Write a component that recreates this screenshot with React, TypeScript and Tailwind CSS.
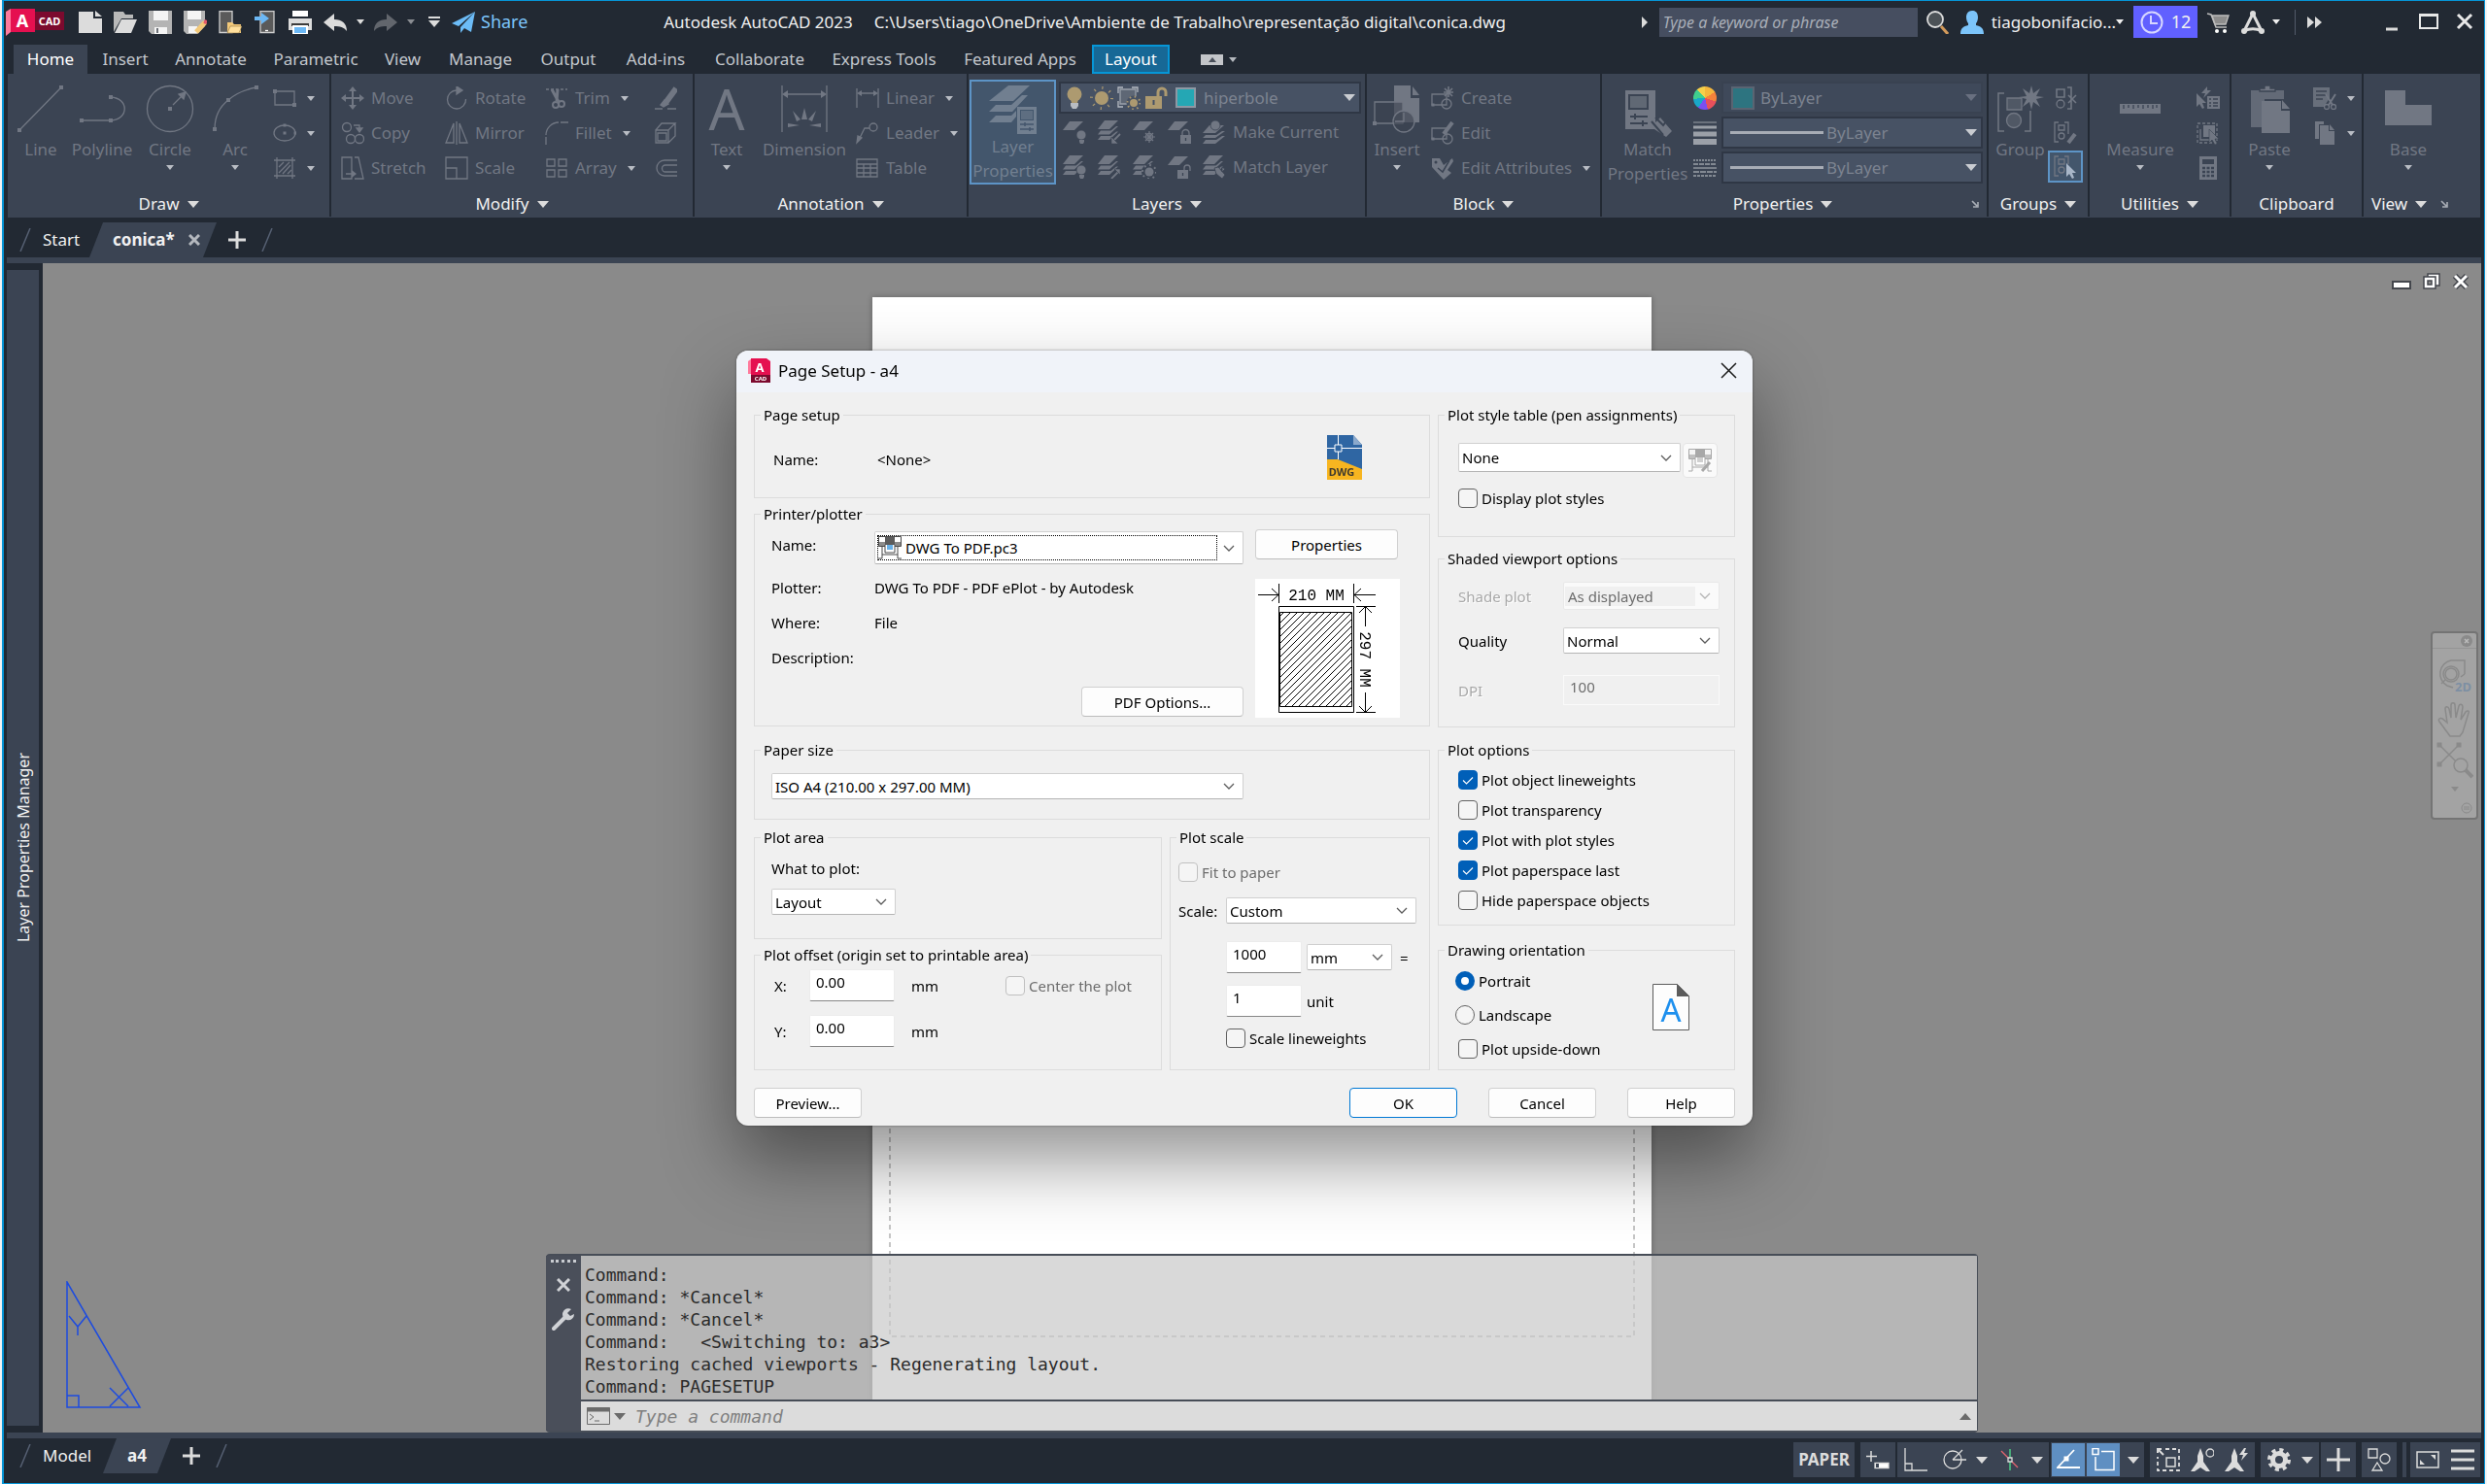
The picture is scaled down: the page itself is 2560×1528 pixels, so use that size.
import { ReactNode } from "react";
import clsx from "clsx";

type ChildrenProps = { children?: ReactNode; className?: string };

/* ---------- drawing helpers ---------- */

const Icon = ({
  size = 24,
  children,
  className,
}: ChildrenProps & { size?: number }) => (
  <svg
    width={size}
    height={size}
    viewBox={`0 0 ${size} ${size}`}
    fill="none"
    stroke="currentColor"
    strokeWidth="1.3"
    className={clsx("shrink-0", className)}
    aria-hidden="true"
  >
    {children}
  </svg>
);

const Dot = ({ x, y, s = 4 }: { x: number; y: number; s?: number }) => (
  <rect
    x={x - s / 2}
    y={y - s / 2}
    width={s}
    height={s}
    fill="currentColor"
    stroke="none"
  />
);

const Arrow = ({ className }: { className?: string }) => (
  <svg
    width="8"
    height="5"
    viewBox="0 0 8 5"
    className={clsx("shrink-0 fill-current", className)}
    aria-hidden="true"
  >
    <path d="M0 0h8L4 5z" />
  </svg>
);

const BigArrow = ({ className }: { className?: string }) => (
  <svg
    width="12"
    height="7"
    viewBox="0 0 12 7"
    className={clsx("shrink-0 fill-current", className)}
    aria-hidden="true"
  >
    <path d="M0 0h12L6 7z" />
  </svg>
);

const Sheet = () => (
  <path d="M7 1h14L12 10H0z" fill="currentColor" stroke="none" />
);

const Stack = () => (
  <path
    d="M7 0h14L12 9H0zM19 6h2L12 14.500H0l3-4h10.500zM19 11.500h2L12 20H0l3-4h10.500z"
    fill="currentColor"
    stroke="none"
  />
);

/* ---------- ribbon icons ---------- */

const lineIcon = (
  <Icon size={50}>
    <path d="M3 47L46 3" />
    <Dot x={3} y={47} />
    <Dot x={46} y={3} />
  </Icon>
);
const polylineIcon = (
  <Icon size={50}>
    <path d="M4 37h30c19-1 19-23 0-24" />
    <Dot x={4} y={37} />
    <Dot x={34} y={37} />
    <Dot x={34} y={13} />
  </Icon>
);
const circleIcon = (
  <Icon size={50}>
    <circle cx="25" cy="25" r="23.5" />
    <path d="M28 21l11-11" />
    <path d="M41 8l-2 7-5-5z" fill="currentColor" />
    <Dot x={25} y={25} />
  </Icon>
);
const arcIcon = (
  <Icon size={50}>
    <path d="M4 46c0-12 5-23 14-30C26 9 36 5 47 3" />
    <Dot x={4} y={46} />
    <Dot x={18} y={16} />
    <Dot x={47} y={3} />
  </Icon>
);
const rectIcon = (
  <Icon>
    <path d="M2 5h20v14H2z" />
    <Dot x={2} y={5} />
    <Dot x={22} y={19} />
  </Icon>
);
const ellipseIcon = (
  <Icon>
    <ellipse cx="12" cy="12" rx="11" ry="8" />
    <Dot x={12} y={12} s={3} />
    <Dot x={12} y={4} s={3} />
    <Dot x={23} y={12} s={3} />
  </Icon>
);
const hatchIcon = (
  <Icon>
    <path d="M1 4h22M1 20h22M4 1v22M20 1v22" />
    <path d="M6 11l5-5M6 17L17 6M10 18l8-9M15 18l4-4" />
  </Icon>
);
const moveIcon = (
  <Icon>
    <path d="M12 3v18M3 12h18" strokeWidth="2" />
    <path
      d="M12 0l4 5H8zM12 24l4-5H8zM0 12l5-4v8zM24 12l-5-4v8z"
      fill="currentColor"
      stroke="none"
    />
  </Icon>
);
const copyIcon = (
  <Icon>
    <circle cx="6" cy="6" r="4.5" />
    <circle cx="10" cy="18" r="4.5" />
    <circle cx="19" cy="18" r="4.5" />
    <path d="M13 4h6v4" />
    <path d="M16 7h6l-3 4z" fill="currentColor" />
  </Icon>
);
const stretchIcon = (
  <Icon>
    <path d="M1 1h10v22H1zM14 1l4 0 5 22h-9M5 18h10" />
    <path d="M11 14l5 4-5 4z" fill="currentColor" stroke="none" />
  </Icon>
);
const rotateIcon = (
  <Icon>
    <path d="M12 4a9.500 9.500 0 1 0 9.500 9" />
    <path d="M12 0l6 4-6 4z" fill="currentColor" />
  </Icon>
);
const mirrorIcon = (
  <Icon>
    <path d="M9 2v20H1zM15 2v20h8zM12 0v24" />
  </Icon>
);
const scaleIcon = (
  <Icon>
    <path d="M1 1h22v22H1zM1 12h11v11" />
  </Icon>
);
const trimIcon = (
  <Icon>
    <path d="M1 3h22" strokeDasharray="3 2" />
    <path d="M7 3l7 13M13 3l-1 12" strokeWidth="3" />
    <circle cx="11" cy="19" r="3" strokeWidth="2" />
    <circle cx="17" cy="18" r="3" strokeWidth="2" />
  </Icon>
);
const filletIcon = (
  <Icon>
    <path d="M1 14C1 7 7 1 14 1M1 16v8M16 1h8" />
  </Icon>
);
const arrayIcon = (
  <Icon>
    <path d="M2 3h8v7H2zM14 3h8v7h-8zM2 14h8v7H2zM14 14h8v7h-8z" />
  </Icon>
);
const eraseIcon = (
  <Icon>
    <path d="M23 2L12 17" strokeWidth="6" />
    <path d="M7 19l4-5 4 4-5 3z" fill="currentColor" />
    <path d="M1 23h8M14 23h9" />
  </Icon>
);
const explodeIcon = (
  <Icon>
    <path d="M2 9h13v13H2zM4 12h9v8H4zM2 9l6-7h14l-7 7M22 2v13l-7 7M9 2h12" />
  </Icon>
);
const offsetIcon = (
  <Icon>
    <path d="M24 4H11a8 8 0 0 0 0 16h13M24 9H12a3.500 3.500 0 0 0 0 7h12" />
  </Icon>
);
const textIcon = (
  <span className="font-['Noto_Sans',sans-serif] text-[58px] leading-[50px]">A</span>
);
const dimensionIcon = (
  <Icon size={50}>
    <path d="M2 1v48M48 1v48M4 10h42" />
    <path
      d="M2 10l6-4v8zM48 10l-6-4v8zM25 24l3 12h-6zM13 27l8 9-4 2zM37 27l-8 9 4 2zM8 40l12 2-12 2zM42 40l-12 2 12 2z"
      fill="currentColor"
      stroke="none"
    />
  </Icon>
);
const linearIcon = (
  <Icon>
    <path d="M1 2v20M23 2v20M3 7h18" />
    <path d="M1 7l5-3v6zM23 7l-5-3v6z" fill="currentColor" stroke="none" />
  </Icon>
);
const leaderIcon = (
  <Icon>
    <circle cx="18" cy="6" r="4" />
    <path d="M14 7H9L3 19" />
    <path d="M1 22l1-7 4 2z" fill="currentColor" />
  </Icon>
);
const tableIcon = (
  <Icon>
    <path d="M1 3h21v18H1zM1 8h21M1 12h21M1 17h21M8 8v13M15 8v13" />
  </Icon>
);
const layerPropsIcon = (
  <svg width="50" height="50" viewBox="0 0 50 50" fill="currentColor" aria-hidden="true">
    <path d="M20 0h22L25 16H0zM7 20L0 27h24l16-17h-6L23 20zM7 31l-7 7h23l5-6v-6l-5 5z" />
    <path fillRule="evenodd" d="M29 22h20v28H29zM32 25v11h14V25z" />
    <path d="M33 26h12v9H33z" opacity=".6" />
    <path d="M32 40h14M32 45h14M37 38v4M42 43v4" stroke="#43566c" strokeWidth="1.500" />
  </svg>
);
const insertIcon = (
  <Icon size={50}>
    <path d="M22 1h17v13h9v25H22z" fill="currentColor" stroke="none" />
    <path d="M41 2v9h7z" fill="currentColor" stroke="none" />
    <path d="M2 18h29v22H2z" fill="#3c4250" fillOpacity=".6" />
    <circle cx="32" cy="38" r="11" fill="#3c4250" fillOpacity=".6" />
    <path d="M32 29v9h-9" />
    <Dot x={2} y={40} />
  </Icon>
);
const createIcon = (
  <Icon>
    <path d="M1 8h15v11H1z" />
    <circle cx="16" cy="18" r="5" />
    <path d="M18 0v11M13 6h10M14 2l8 8M22 2l-8 8" strokeWidth="1.600" />
    <Dot x={2} y={19} s={3} />
  </Icon>
);
const editIcon = (
  <Icon>
    <path d="M1 7h15v11H1z" />
    <circle cx="17" cy="18" r="5" />
    <path d="M22 1L13 13" strokeWidth="4" />
    <Dot x={2} y={18} s={3} />
  </Icon>
);
const attributesIcon = (
  <Icon>
    <path d="M1 2h8l4 7 9-7 1 3-6 9 4 3-8 7L1 11z" fill="currentColor" stroke="none" />
    <path d="M7 12l5 4 7-12" stroke="#3b4453" strokeWidth="1.500" />
    <circle cx="5" cy="6" r="1.500" fill="#3b4453" stroke="none" />
  </Icon>
);
const matchPropsIcon = (
  <Icon size={50}>
    <path fillRule="evenodd" d="M2 2h31v33l5-5 12 14-6 6-12-8H2zM5 6v16h21V6z" fill="currentColor" stroke="none" />
    <path d="M7 29h18M7 36h18M12 26v6M20 33v6M29 34l12 14M33 30l8 8 7-9" stroke="#3b4453" strokeWidth="2" />
    <path d="M7 8h17v12H7z" fill="currentColor" stroke="none" opacity=".7" />
  </Icon>
);
const weightIcon = (
  <Icon>
    <path d="M0 1h24" strokeWidth="1" />
    <path d="M0 6h24" strokeWidth="3" />
    <path d="M0 13h24" strokeWidth="5" />
    <path d="M0 21h24" strokeWidth="6" />
  </Icon>
);
const linetypeIcon = (
  <Icon>
    <path d="M0 4h24" strokeDasharray="2 1" />
    <path d="M0 8h24" strokeDasharray="5 1" />
    <path d="M0 12h24" />
    <path d="M0 16h24" strokeDasharray="6 1" />
    <path d="M0 20h24" strokeDasharray="3 1" />
  </Icon>
);
const groupIcon = (
  <Icon size={50}>
    <path d="M8 9H2v39h6M29 48h6V27" strokeWidth="1.500" />
    <path d="M11 14h15v12H11z" fill="currentColor" fillOpacity=".4" />
    <circle cx="18" cy="37" r="7.500" fill="currentColor" fillOpacity=".4" />
    <path
      d="M36 1l2 8 7-5-4 8 8 1-8 2 4 8-7-5-2 8-2-8-7 5 4-8-8-2 8-1-4-8 7 5z"
      fill="currentColor"
      stroke="none"
    />
  </Icon>
);
const ungroupIcon = (
  <Icon>
    <path d="M3 3h8v8H3zM14 1h4v22h-4M15 9l8 8M23 9l-8 8" strokeWidth="1.600" />
    <circle cx="7" cy="18" r="4" />
  </Icon>
);
const groupEditIcon = (
  <Icon>
    <path d="M5 1H1v20h4M11 1h4v12M5 4h6v5H5z" />
    <circle cx="8" cy="15" r="3" />
    <path d="M22 13l-7 9" strokeWidth="4" />
  </Icon>
);
const cursorPath = "M13 8v14l3-3 3 5 2-1-2-5h4z";
const groupSelectIcon = (
  <Icon>
    <path d="M5 1H1v20h4M11 1h4v8M5 4h6v5H5z" />
    <circle cx="8" cy="15" r="3" />
    <path d={cursorPath} fill="#a8b6c8" stroke="none" />
  </Icon>
);
const measureIcon = (
  <Icon size={50}>
    <path d="M4 20h42v10H4z" fill="currentColor" stroke="none" />
    <path d="M8 21v4M13 21v3M18 21v4M23 21v3M28 21v4M33 21v3M38 21v4M42 21v3" stroke="#3b4453" />
  </Icon>
);
const quickSelectIcon = (
  <Icon>
    <path d="M11 0L5 7h4L7 12l8-8h-4zM0 7v14l3-3 3 5 2-1-2-5h4z" fill="currentColor" stroke="none" />
    <path d="M11 10h13v13H11z" fill="currentColor" stroke="none" />
    <path d="M13 13h2M17 13h5M13 17h2M17 17h5M13 20h2M17 20h5" stroke="#3b4453" />
  </Icon>
);
const selectAllIcon = (
  <Icon>
    <path d="M1 2h20v20H1z" strokeDasharray="3 2" />
    <path d="M7 4h12v12H7z" fill="currentColor" stroke="none" />
    <path d="M4 8v11h10" />
    <path d={cursorPath} fill="currentColor" stroke="#3b4453" strokeWidth=".6" />
  </Icon>
);
const calculatorIcon = (
  <Icon>
    <path d="M3 0h18v24H3z" fill="currentColor" stroke="none" />
    <path d="M6 3h12v5H6z" fill="#3b4453" stroke="none" />
    <path d="M6 12h12M6 16h12M6 20h12" stroke="#3b4453" strokeWidth="2.500" strokeDasharray="3 1.500" />
  </Icon>
);
const pasteIcon = (
  <Icon size={50}>
    <path d="M6 6h34v9H20v29H6z" fill="currentColor" stroke="none" opacity=".75" />
    <path d="M15 7h16V4h-5V1h-6v3h-5z" fill="currentColor" stroke="#3b4453" />
    <path d="M17 17h20v10h9v23H17z" fill="currentColor" stroke="none" />
    <path d="M38 16v9h8z" fill="currentColor" stroke="none" />
  </Icon>
);
const cutIcon = (
  <Icon>
    <path d="M0 1h17v11l-6 9H0z" fill="currentColor" stroke="none" opacity=".85" />
    <path d="M3 5h11M3 9h10M3 13h7" stroke="#3b4453" />
    <path d="M13 8l7 11M23 8l-7 11" strokeWidth="2" />
    <circle cx="14" cy="21" r="2.500" />
    <circle cx="21" cy="21" r="2.500" />
  </Icon>
);
const copyClipIcon = (
  <Icon>
    <path d="M2 0h9v3H6v15H2z" fill="currentColor" stroke="none" />
    <path d="M7 4h9v6h6v14H7z" fill="currentColor" stroke="none" />
    <path d="M17 3v6h5z" fill="currentColor" stroke="none" />
  </Icon>
);
const baseIcon = (
  <Icon size={50}>
    <path d="M1 6h21v15h27v21H1z" fill="currentColor" stroke="none" />
  </Icon>
);

const bulb = (
  <>
    <circle cx="19" cy="15" r="5" fill="currentColor" stroke="#3b4453" strokeWidth=".8" />
    <path d="M17 20h5v2l-1 2h-3l-1-2z" fill="currentColor" stroke="none" />
  </>
);
const layerTools = [
  [
    <Icon><Sheet />{bulb}</Icon>,
    <Icon><Stack /><path d="M23 14l-7 7" strokeWidth="1.800" /><path d="M14 17v7h7z" fill="currentColor" stroke="#3b4453" strokeWidth=".6" /></Icon>,
    <Icon>
      <Sheet />
      <circle cx="17" cy="17" r="3.500" />
      <path d="M17 11v12M11 17h12M13 13l8 8M21 13l-8 8" strokeWidth="1.200" />
    </Icon>,
    <Icon>
      <Sheet />
      <path d="M13 15h11v9H13z" fill="currentColor" stroke="none" />
      <path d="M15 15v-2a3.500 3.500 0 0 1 7 0v2" />
      <path d="M18.500 18v3" stroke="#3b4453" />
    </Icon>,
  ],
  [
    <Icon><Stack />{bulb}</Icon>,
    <Icon><Stack /><path d="M14 24l7-7" strokeWidth="1.800" /><path d="M17 14h6v6z" fill="currentColor" stroke="#3b4453" strokeWidth=".6" /></Icon>,
    <Icon>
      <Stack />
      <circle cx="17" cy="17" r="8" fill="#3b4453" stroke="none" />
      <circle cx="17" cy="17" r="4.500" fill="currentColor" stroke="none" />
      <circle cx="17" cy="17" r="7" strokeDasharray="1.800 3.700" strokeWidth="2" />
    </Icon>,
    <Icon>
      <Sheet />
      <path d="M10 15h11v9H10z" fill="currentColor" stroke="none" />
      <path d="M17 15v-2a3 3 0 0 1 6 0v3" />
      <path d="M15.500 18v3" stroke="#3b4453" />
    </Icon>,
  ],
];
const makeCurrentIcon = (
  <Icon>
    <path
      d="M7 5h15L13 13H0zM20 11h3L13 18H0l3-3h11zM20 16h3L13 24H0l3-4h11z"
      fill="currentColor"
      stroke="none"
    />
    <circle cx="13" cy="5" r="5" fill="currentColor" stroke="#3b4453" strokeWidth=".8" />
  </Icon>
);
const matchLayerIcon = (
  <Icon>
    <Stack />
    <path d="M12 13l4-1 7 8-3 4-6-5zM20 12l3 2-3 3z" fill="currentColor" stroke="#3b4453" strokeWidth=".8" />
  </Icon>
);

/* ---------- ribbon building blocks ---------- */

const LauncherIcon = ({ className }: { className?: string }) => (
  <svg
    width="8"
    height="8"
    viewBox="0 0 8 8"
    fill="none"
    stroke="#a9aeb6"
    strokeWidth="1.600"
    className={className}
  >
    <path d="M1 1l5 5M7 2v5H2" />
  </svg>
);

const Panel = ({
  title,
  className,
  arrow = true,
  launcher,
  children,
}: ChildrenProps & {
  title: string;
  arrow?: boolean;
  launcher?: "edge" | "inline";
}) => (
  <section
    className={clsx(
      "flex shrink-0 flex-col border-r-2 border-[#222933] last:shrink last:border-r-0",
      className
    )}
  >
    <div className="flex h-[120px] pt-[7px] text-[#717783]">{children}</div>
    <button
      className={clsx(
        "flex h-7 items-center gap-2 pt-0.5 text-[17px] text-[#f0f0f0]",
        launcher === "inline" ? "pl-2" : "justify-center"
      )}
    >
      <span className={clsx(launcher === "edge" && "ml-auto")}>{title}</span>
      {arrow && <BigArrow className="text-[#dcdcdc]" />}
      {launcher && (
        <LauncherIcon className={launcher === "edge" ? "mr-2 ml-auto" : "ml-1.5"} />
      )}
    </button>
  </section>
);

const BigTool = ({
  icon,
  label,
  arrow = false,
  className,
}: {
  icon: ReactNode;
  label: string;
  arrow?: boolean;
  className?: string;
}) => (
  <button disabled className={clsx("flex flex-col items-center pt-1", className)}>
    {icon}
    <span className="mt-1 text-[17px] leading-[25px]">{label}</span>
    {arrow && <Arrow className="mt-1 text-[#b9bdc4]" />}
  </button>
);

const Tool = ({
  icon,
  label,
  arrow = false,
}: {
  icon: ReactNode;
  label?: string;
  arrow?: boolean;
}) => (
  <button disabled className="flex h-9 items-center gap-[7px] text-[17px] whitespace-nowrap">
    {icon}
    {label}
    {arrow && <Arrow className="ml-1 text-[#b9bdc4]" />}
  </button>
);

const RibbonSelect = ({
  value,
  label,
  lead,
  dim = false,
}: {
  value: string;
  label: string;
  lead: ReactNode;
  dim?: boolean;
}) => (
  <div
    className={clsx(
      "flex h-[33px] items-center border-2 pr-1",
      dim ? "border-[#394251] bg-[#3f495a]" : "border-[#2f3745] bg-[#475264]"
    )}
  >
    {lead}
    <select
      aria-label={label}
      className="min-w-0 flex-1 appearance-none bg-transparent text-[17px] text-[#7c8390] outline-none"
    >
      <option>{value}</option>
    </select>
    <BigArrow className={dim ? "text-[#697080]" : "text-[#c9ccd1]"} />
  </div>
);

const tabs = [
  { name: "Home", className: "w-[76px] bg-[#3b4453] text-white" },
  { name: "Insert", className: "w-[78px] text-[#c3c7cd]" },
  { name: "Annotate", className: "w-[98px] text-[#c3c7cd]" },
  { name: "Parametric", className: "w-[118px] text-[#c3c7cd]" },
  { name: "View", className: "w-[61px] text-[#c3c7cd]" },
  { name: "Manage", className: "w-[99px] text-[#c3c7cd]" },
  { name: "Output", className: "w-[82px] text-[#c3c7cd]" },
  { name: "Add-ins", className: "w-[98px] text-[#c3c7cd]" },
  { name: "Collaborate", className: "w-[116px] text-[#c3c7cd]" },
  { name: "Express Tools", className: "w-[140px] text-[#c3c7cd]" },
  { name: "Featured Apps", className: "w-[140px] text-[#c3c7cd]" },
  {
    name: "Layout",
    className: "ml-1 w-[80px] border-2 border-[#0696d7] bg-[#176896] text-white",
  },
];

const quickTools = [
  {
    name: "New",
    icon: (
      <Icon>
        <path d="M0 1h15v7h9v15H0zM17 0l7 6h-7z" fill="#dcdcdc" stroke="none" />
      </Icon>
    ),
  },
  {
    name: "Open",
    icon: (
      <Icon>
        <path d="M0 1h10l2 3h8v4H8L0 22z" fill="#b9b9b9" stroke="none" />
        <path d="M8 9h16l-6 14H1z" fill="#dcdcdc" stroke="none" />
      </Icon>
    ),
  },
  {
    name: "Save",
    icon: (
      <Icon>
        <path d="M0 0h24v24H3l-3-3z" fill="#b4b4b4" stroke="none" />
        <path d="M5 0h15v10H5zM6 17h13v7H6z" fill="#f4f4f4" stroke="none" />
        <path d="M9 18v5" stroke="#222933" />
      </Icon>
    ),
  },
  {
    name: "Save As",
    icon: (
      <Icon>
        <path d="M0 0h22v16l-8 8H3l-3-3z" fill="#b4b4b4" stroke="none" />
        <path d="M4 0h14v9H4zM5 16h9v7H5z" fill="#f4f4f4" stroke="none" />
        <path d="M22 12l-9 10" stroke="#f2c879" strokeWidth="5" />
        <path d="M24 12l-3-1" stroke="#e4596b" strokeWidth="4" />
      </Icon>
    ),
  },
  {
    name: "Open from Web & Mobile",
    icon: (
      <Icon>
        <path d="M1 .5h13v22H1z" fill="#5a5a5a" stroke="#d0d0d0" />
        <path d="M9 12h5l2 2h7v9H9z" fill="#f2c879" stroke="none" />
        <path d="M12 16h12l-3 7H9z" fill="#ffdf9c" stroke="#7d6330" strokeWidth=".5" />
      </Icon>
    ),
  },
  {
    name: "Save to Web & Mobile",
    icon: (
      <Icon>
        <path d="M7 .5h14v22H7z" fill="#5a5a5a" stroke="#d0d0d0" />
        <path d="M1 8h8" stroke="#6cb8f5" strokeWidth="4" />
        <path d="M8 2l8 6-8 6z" fill="#6cb8f5" stroke="none" />
        <path d="M12 20.500h3" stroke="#fff" />
      </Icon>
    ),
  },
  {
    name: "Plot",
    icon: (
      <Icon>
        <path d="M4 0h16v6H4z" fill="#fff" stroke="none" />
        <path d="M0 8h24v12H0z" fill="#dcdcdc" stroke="none" />
        <path d="M3 13h18v3H3z" fill="#3c3c3c" stroke="none" />
        <path d="M4 15h16v9H4z" fill="#fff" stroke="none" />
        <path d="M6 17h12v6H6z" fill="#6cb8f5" stroke="none" />
      </Icon>
    ),
  },
];

const undoPath = "M0 12L11 3v6c8 0 13 4 13 12-3-4-7-5-13-5v5z";

const TitleBar = () => (
  <header className="flex h-[45px] items-center pb-0.5 pl-[2px] text-[18px] text-[#f0f0f0]">
    <svg width="60" height="28" viewBox="0 0 60 28" aria-label="AutoCAD">
      <path d="M0 3l5-3v24l-5 4z" fill="#ff7a9c" />
      <path d="M5 0h25v24H5z" fill="#e51050" />
      <path d="M30 3h30v19H30z" fill="#7c0a2e" />
      <text x="17" y="19" fill="#fff" fontSize="18" fontWeight="700" textAnchor="middle" fontFamily="Noto Sans, sans-serif">A</text>
      <text x="45" y="17" fill="#fff" fontSize="11" fontWeight="700" textAnchor="middle" fontFamily="Noto Sans, sans-serif">CAD</text>
    </svg>
    <nav aria-label="Quick access" className="ml-[9px] flex items-center">
      {quickTools.map(({ name, icon }) => (
        <button key={name} aria-label={name} className="flex w-9 justify-center">
          {icon}
        </button>
      ))}
      <button aria-label="Undo" className="flex w-9 justify-center">
        <Icon><path d={undoPath} fill="#dcdcdc" stroke="none" /></Icon>
      </button>
      <Arrow className="mx-1 text-[#dcdcdc]" />
      <button aria-label="Redo" disabled className="flex w-9 -scale-x-100 justify-center">
        <Icon><path d={undoPath} fill="#62666d" stroke="none" /></Icon>
      </button>
      <Arrow className="mx-1 text-[#8a8d92]" />
      <button aria-label="Customize" className="flex w-8 justify-center">
        <svg width="12" height="11" viewBox="0 0 12 11" fill="#dcdcdc">
          <path d="M0 0h12v2H0zM0 4h12l-6 7z" />
        </svg>
      </button>
      <button className="ml-0.5 flex items-center gap-1.5 text-[#7cc4fa]">
        <Icon>
          <path d="M24 1L0 13l7 3zM24 1L9 17v6l4-5 7 4z" fill="#6cbcf7" stroke="none" />
        </Icon>
        Share
      </button>
    </nav>
    <h1 className="flex-1 text-center text-[17px] whitespace-pre">
      {"Autodesk AutoCAD 2023     C:\\Users\\tiago\\OneDrive\\Ambiente de Trabalho\\representação digital\\conica.dwg"}
    </h1>
    <svg width="6" height="12" viewBox="0 0 6 12" fill="#dcdcdc" className="mr-3">
      <path d="M0 0l6 6-6 6z" />
    </svg>
    <input
      aria-label="Search"
      placeholder="Type a keyword or phrase"
      className="h-[30px] w-[266px] bg-[#464e60] px-1 text-[16px] italic placeholder:text-[#a9aeb8]"
    />
    <button aria-label="Search help" className="flex w-10 justify-center">
      <Icon>
        <circle cx="10" cy="9" r="8" fill="#4c5257" stroke="#dcdcdc" strokeWidth="1.800" />
        <path d="M16 16l7 8" stroke="#d29a5b" strokeWidth="3" />
      </Icon>
    </button>
    <button className="ml-1 flex items-center gap-1 text-[17px]">
      <Icon className="mr-1">
        <path d="M12 0c5 0 6 4 6 7 0 2-1 5-2 6v2c5 1 8 3 8 9H0c0-6 3-8 8-9v-2c-1-1-2-4-2-6 0-3 1-7 6-7z" fill="#7cc4fa" stroke="none" />
      </Icon>
      tiagobonifacio...
      <Arrow className="-ml-1" />
    </button>
    <button className="ml-2.5 flex h-[33px] w-[66px] items-center justify-center gap-2 bg-[#6160ff]">
      <Icon>
        <circle cx="12" cy="12" r="10.500" stroke="#d7d7ff" strokeWidth="2" />
        <path d="M11 5v8h7" stroke="#d7d7ff" strokeWidth="2" />
      </Icon>
      12
    </button>
    <button aria-label="App store" className="flex w-[42px] justify-center">
      <Icon>
        <path d="M1 3l4 1 5 13h11" stroke="#bdbdbd" strokeWidth="1.500" />
        <path d="M6 5h17l-3 9H9z" fill="#8d8d8d" stroke="#bdbdbd" />
        <circle cx="11" cy="21" r="2" fill="#fff" stroke="none" />
        <circle cx="19" cy="21" r="2" fill="#fff" stroke="none" />
      </Icon>
    </button>
    <button aria-label="Autodesk" className="flex w-[46px] items-center justify-center gap-2">
      <Icon>
        <path d="M12 3L3 21M12 3l9 18M3 21c6-3 12-3 18 0" stroke="#dcdcdc" strokeWidth="3" />
        <circle cx="12" cy="3" r="3" fill="#dcdcdc" stroke="none" />
        <circle cx="3" cy="21" r="3" fill="#dcdcdc" stroke="none" />
        <circle cx="21" cy="21" r="3" fill="#dcdcdc" stroke="none" />
      </Icon>
      <Arrow />
    </button>
    <div className="ml-3 h-[26px] w-px bg-[#525b69]" />
    <button aria-label="More" className="flex w-10 justify-center">
      <svg width="16" height="12" viewBox="0 0 16 12" fill="#dcdcdc">
        <path d="M0 0l7 6-7 6zM8 0l7 6-7 6z" />
      </svg>
    </button>
    <div className="mr-[2px] ml-10 flex">
      <button aria-label="Minimize" className="flex w-[38px] justify-center">
        <Icon><path d="M6 19h12" stroke="#dcdcdc" strokeWidth="3" /></Icon>
      </button>
      <button aria-label="Maximize" className="flex w-[38px] justify-center">
        <Icon><path d="M3 4h18v14H3z" stroke="#e8e8e8" strokeWidth="2" /><path d="M2 4.500h20" stroke="#e8e8e8" strokeWidth="3" /></Icon>
      </button>
      <button aria-label="Close" className="flex w-[36px] justify-center">
        <Icon><path d="M5 4l14 14M19 4L5 18" stroke="#e8e8e8" strokeWidth="3" /></Icon>
      </button>
    </div>
  </header>
);

const Ribbon = () => (
  <div className="mr-1 ml-1 flex h-[148px] bg-[#3b4453] pb-px">
    <Panel title="Draw" className="w-[333px]">
      <BigTool icon={lineIcon} label="Line" className="ml-1 w-[60px]" />
      <BigTool icon={polylineIcon} label="Polyline" className="w-[66px]" />
      <BigTool icon={circleIcon} label="Circle" arrow className="w-[74px]" />
      <BigTool icon={arcIcon} label="Arc" arrow className="w-[60px]" />
      <div className="ml-[9px] flex flex-col">
        <Tool icon={rectIcon} arrow />
        <Tool icon={ellipseIcon} arrow />
        <Tool icon={hatchIcon} arrow />
      </div>
    </Panel>
    <Panel title="Modify" className="w-[374px]">
      <div className="ml-2.5 w-[107px]">
        <Tool icon={moveIcon} label="Move" />
        <Tool icon={copyIcon} label="Copy" />
        <Tool icon={stretchIcon} label="Stretch" />
      </div>
      <div className="w-[103px]">
        <Tool icon={rotateIcon} label="Rotate" />
        <Tool icon={mirrorIcon} label="Mirror" />
        <Tool icon={scaleIcon} label="Scale" />
      </div>
      <div className="w-[112px]">
        <Tool icon={trimIcon} label="Trim" arrow />
        <Tool icon={filletIcon} label="Fillet" arrow />
        <Tool icon={arrayIcon} label="Array" arrow />
      </div>
      <div>
        <Tool icon={eraseIcon} />
        <Tool icon={explodeIcon} />
        <Tool icon={offsetIcon} />
      </div>
    </Panel>
    <Panel title="Annotation" className="w-[282px]">
      <BigTool icon={textIcon} label="Text" arrow className="w-[66px]" />
      <BigTool icon={dimensionIcon} label="Dimension" className="w-[94px]" />
      <div className="ml-1.5">
        <Tool icon={linearIcon} label="Linear" arrow />
        <Tool icon={leaderIcon} label="Leader" arrow />
        <Tool icon={tableIcon} label="Table" />
      </div>
    </Panel>
    <Panel title="Layers" className="w-[410px]">
      <button className="-mt-px ml-px flex h-[108px] w-[89px] flex-col items-center border-2 border-[#5d94c6] bg-[#43566c] pt-1 text-[17px] leading-[25px] text-[#717f90]">
        {layerPropsIcon}
        <span>Layer</span>
        <span>Properties</span>
      </button>
      <div className="mr-1 ml-[3px] flex flex-1 flex-col pt-px">
        <RibbonSelect
          label="Layer"
          value="hiperbole"
          lead={
            <span className="flex items-center gap-1 pr-2 pl-0.5">
              <Icon>
                <circle cx="12" cy="8" r="7.500" fill="#ad9a70" stroke="none" />
                <path d="M8 13h8l-1 4H9z" fill="#ad9a70" stroke="none" />
                <path d="M8 17h8v3l-2 3h-4l-2-3z" fill="#b8bcc2" stroke="none" />
              </Icon>
              <Icon>
                <circle cx="12" cy="12" r="7" fill="#ad9a70" stroke="none" />
                <circle cx="12" cy="12" r="10.500" stroke="#ad9a70" strokeWidth="3" strokeDasharray="1.200 7.050" />
              </Icon>
              <Icon>
                <path d="M1 7V1h5M15 1h6v5M1 15v6h5" stroke="#b4b9c1" />
                <path d="M3 3h16v15H3z" fill="#5e6775" stroke="#9aa1ab" />
                <circle cx="17" cy="17" r="7.500" fill="#475264" stroke="none" />
                <circle cx="17" cy="17" r="4" fill="#ad9a70" stroke="none" />
                <circle cx="17" cy="17" r="6.500" stroke="#ad9a70" strokeDasharray="1.500 3.600" strokeWidth="2" />
              </Icon>
              <Icon>
                <path d="M1 10h17v13H1z" fill="#ad9a70" stroke="none" />
                <path d="M14 10V6a4 4 0 0 1 8 0v4" stroke="#ad9a70" strokeWidth="3" />
                <path d="M9.500 14v5" stroke="#475264" strokeWidth="2" />
              </Icon>
              <span className="ml-1 size-[21px] border-2 border-[#8d98a4] bg-[#25a7b4]" />
            </span>
          }
        />
        <div className="mt-[1px] grid grid-cols-[36px_36px_36px_36px_1fr] pl-1">
          {layerTools[0].map((icon, i) => (
            <Tool key={i} icon={icon} />
          ))}
          <Tool icon={makeCurrentIcon} label="Make Current" />
          {layerTools[1].map((icon, i) => (
            <Tool key={i} icon={icon} />
          ))}
          <Tool icon={matchLayerIcon} label="Match Layer" />
        </div>
      </div>
    </Panel>
    <Panel title="Block" className="w-[242px]">
      <BigTool icon={insertIcon} label="Insert" arrow className="w-[62px]" />
      <div className="ml-1">
        <Tool icon={createIcon} label="Create" />
        <Tool icon={editIcon} label="Edit" />
        <Tool icon={attributesIcon} label="Edit Attributes" arrow />
      </div>
    </Panel>
    <Panel title="Properties" launcher="edge" className="w-[398px]">
      <button disabled className="flex w-[94px] flex-col items-center pt-2 text-[17px] leading-[25px]">
        {matchPropsIcon}
        <span>Match</span>
        <span>Properties</span>
      </button>
      <div className="flex w-[29px] flex-col text-[#9ba0a8]">
        <span className="flex h-9 items-center">
          <span className="size-6 rounded-full bg-[conic-gradient(#f6b73c_0_16%,#f5823b_0_30%,#e8505b_0_46%,#7b4ff0_0_60%,#19a8c8_0_74%,#3fcf8e_0_88%,#f6d04a_0)]" />
        </span>
        <span className="flex h-9 items-center">{weightIcon}</span>
        <span className="flex h-9 items-center">{linetypeIcon}</span>
      </div>
      <div className="mr-1 flex flex-1 flex-col gap-[3px] pt-px">
        <RibbonSelect
          dim
          label="Object color"
          value="ByLayer"
          lead={<span className="mr-1.5 ml-2 size-6 border-2 border-[#5a6472] bg-[#2d7480]" />}
        />
        {["Lineweight", "Linetype"].map((label) => (
          <RibbonSelect
            key={label}
            label={label}
            value="ByLayer"
            lead={<span className="mr-[3px] ml-[7px] h-[3px] w-24 bg-[#a7acb5]" />}
          />
        ))}
      </div>
    </Panel>
    <Panel title="Groups" className="w-[104px]">
      <BigTool icon={groupIcon} label="Group" className="w-[61px] pl-1" />
      <div className="flex flex-col items-center">
        <Tool icon={ungroupIcon} />
        <Tool icon={groupEditIcon} />
        <button className="flex h-[33px] w-9 items-center justify-center border-2 border-[#5d94c6] bg-[#43566c]">
          {groupSelectIcon}
        </button>
      </div>
    </Panel>
    <Panel title="Utilities" className="w-[146px]">
      <BigTool icon={measureIcon} label="Measure" arrow className="w-[104px]" />
      <div className="ml-1.5">
        <Tool icon={quickSelectIcon} />
        <Tool icon={selectAllIcon} />
        <Tool icon={calculatorIcon} />
      </div>
    </Panel>
    <Panel title="Clipboard" arrow={false} className="w-[136px]">
      <BigTool icon={pasteIcon} label="Paste" arrow className="w-[78px]" />
      <div className="ml-1.5">
        <Tool icon={cutIcon} arrow />
        <Tool icon={copyClipIcon} arrow />
      </div>
    </Panel>
    <Panel title="View" launcher="inline" className="flex-1">
      <BigTool icon={baseIcon} label="Base" arrow className="w-[92px]" />
    </Panel>
  </div>
);

const Slash = () => (
  <svg width="12" height="24" viewBox="0 0 12 24" stroke="#566073" strokeWidth="1.500">
    <path d="M1 24L11 0" />
  </svg>
);

const Plus = ({ label }: { label: string }) => (
  <button aria-label={label}>
    <svg width="18" height="18" viewBox="0 0 18 18" fill="#dcdcdc">
      <path d="M7.500 0h3v7.500H18v3h-7.500V18h-3v-7.500H0v-3h7.500z" />
    </svg>
  </button>
);

const FileTabs = () => (
  <div className="flex h-[41px] items-center pt-1 pl-4 text-[17px] text-[#f0f0f0]">
    <Slash />
    <button className="ml-3 w-9">Start</button>
    <div className="ml-3 flex h-9 w-[131px] items-center self-end bg-[#3b4453] pl-6 [clip-path:polygon(14px_0,100%_0,117px_100%,0_100%)]">
      <button className="font-bold">conica*</button>
      <button aria-label="Close tab" className="ml-3.5">
        <svg width="12" height="12" viewBox="0 0 12 12" stroke="#b4b8be" strokeWidth="3">
          <path d="M1 1l10 10M11 1L1 11" />
        </svg>
      </button>
    </div>
    <div className="mr-4 ml-3 flex">
      <Plus label="New drawing" />
    </div>
    <Slash />
  </div>
);

/* ---------- drawing area ---------- */

const commandLines = [
  "Command:",
  "Command: *Cancel*",
  "Command: *Cancel*",
  "Command:   <Switching to: a3>",
  "Restoring cached viewports - Regenerating layout.",
  "Command: PAGESETUP",
];

const CommandWindow = () => (
  <div className="flex h-[184px] w-[1474px] max-w-full rounded border-y-2 border-r border-[#474d57] font-['DejaVu_Sans_Mono',monospace] text-[18px]">
    <div className="flex w-9 flex-col items-center bg-[#4a4f5a] pt-1">
      <div className="w-[26px] border-t-3 border-dotted border-[#c9ccd1]" />
      <button aria-label="Close" className="mt-4">
        <svg width="14" height="14" viewBox="0 0 14 14" stroke="#d0d2d6" strokeWidth="3">
          <path d="M1 1l12 12M13 1L1 13" />
        </svg>
      </button>
      <button aria-label="Customize" className="mt-4">
        <Icon>
          <path d="M2 22L14 10" stroke="#d0d2d6" strokeWidth="4" strokeLinecap="round" />
          <path d="M20 2a6 6 0 1 0 3 5l-4 2-3-3z" fill="#d0d2d6" stroke="none" />
        </Icon>
      </button>
    </div>
    <div className="flex flex-1 flex-col">
      <div className="flex-1 bg-[#c9c9c9]/70 pt-2 pl-1 leading-[23px] whitespace-pre text-[#2b2b2b]">
        {commandLines.map((line, i) => (
          <div key={i}>{line}</div>
        ))}
      </div>
      <div className="flex h-8 items-center border-t-2 border-[#474d57] bg-[#dcdcdc] pr-1.5 pl-1.5">
        <svg width="24" height="18" viewBox="0 0 24 18" fill="none" stroke="#6b6b6b">
          <path d="M.5 .5h23v17H.5z" />
          <path d="M0 2.500h24" strokeWidth="4" />
          <path d="M3 7l4 3-4 3M8 14h5" />
        </svg>
        <BigArrow className="mr-2.5 ml-1 text-[#6b6b6b]" />
        <input
          aria-label="Command"
          placeholder="Type a command"
          className="flex-1 bg-transparent italic outline-none placeholder:text-[#808080]"
        />
        <BigArrow className="rotate-180 text-[#6b6b6b]" />
      </div>
    </div>
  </div>
);

const NavigationBar = () => (
  <div className="absolute top-[379px] right-[3px] flex h-[194px] w-[49px] flex-col items-center rounded border-2 border-[#747474] bg-[#a3a3a3] text-[#8a8a8a]">
    <div className="flex h-4 w-full items-center justify-end border-b border-[#959595] pr-1">
      <svg width="12" height="12" viewBox="0 0 12 12">
        <circle cx="6" cy="6" r="6" fill="#8a8a8a" />
        <path d="M4 4l4 4M8 4L4 8" stroke="#bbb" strokeWidth="1.500" />
      </svg>
    </div>
    <svg width="38" height="42" viewBox="0 0 38 42" fill="none" stroke="currentColor" strokeWidth="1.500" className="mt-1.5">
      <path d="M29 20V6H15a14 14 0 0 0-4 26l6 2M29 20l-4 3" />
      <circle cx="15" cy="20" r="8" />
      <circle cx="15" cy="20" r="6" />
      <path d="M9 26l-4 4" />
      <text x="19" y="38" fontSize="13" fontWeight="700" fill="#7d8fa3" stroke="none" fontFamily="Noto Sans, sans-serif">2D</text>
    </svg>
    <svg width="38" height="38" viewBox="0 0 38 38" fill="none" stroke="currentColor" strokeWidth="1.500" className="mt-1.5">
      <path d="M14 36L3 21c-2-3 1-4 3-3l5 4-2-14c0-3 3-3 4 0l2 9 0-13c0-3 4-3 4 0l1 13 3-12c1-3 4-2 4 1l-2 13 5-8c2-2 4-1 3 1l-6 20-3 4z" />
    </svg>
    <svg width="38" height="38" viewBox="0 0 38 38" fill="none" stroke="currentColor" strokeWidth="1.500" className="mt-1">
      <path d="M2 2l22 22M24 2L2 24" />
      <circle cx="25" cy="24" r="7" fill="#a3a3a3" />
      <path d="M30 29l7 7" strokeWidth="4" />
      <Dot x={3} y={3} s={5} />
      <Dot x={23} y={3} s={5} />
      <Dot x={3} y={23} s={5} />
    </svg>
    <Arrow className="mt-2" />
    <svg width="12" height="12" viewBox="0 0 12 12" fill="none" stroke="currentColor" className="mt-auto mr-1 mb-1 self-end">
      <circle cx="6" cy="6" r="5" />
      <path d="M3 5h6M3 7h6" />
    </svg>
  </div>
);

const DrawingArea = () => (
  <main className="flex flex-1 bg-[#222933] pr-[3px] pl-[3px]">
    <aside className="mr-1 mt-[7px] mb-[7px] flex w-[33px] items-center justify-center bg-[#3b4453]">
      <h2 className="rotate-180 text-[16px] text-[#f0f0f0] [writing-mode:vertical-rl]">
        Layer Properties Manager
      </h2>
    </aside>
    <div className="relative flex flex-1 flex-col items-center justify-between overflow-hidden bg-[#8a8a8a] pt-[35px]">
      <div className="h-[1136px] w-[802px] shrink-0 bg-white px-[18px] py-[66px] shadow-[0_0_6px_rgba(0,0,0,0.3)]">
        <svg width="100%" height="100%" className="overflow-visible" aria-hidden="true">
          <rect width="100%" height="100%" fill="none" stroke="#8c8c8c" strokeDasharray="5 4" />
        </svg>
      </div>

      <div className="absolute top-2.5 right-3 flex items-center gap-3">
        <button aria-label="Minimize drawing">
          <svg width="20" height="18" viewBox="0 0 20 18"><path d="M1 9h18v7H1z" fill="#fff" stroke="#44474d" strokeWidth="2" /></svg>
        </button>
        <button aria-label="Restore drawing">
          <svg width="18" height="18" viewBox="0 0 18 18" stroke="#44474d" strokeWidth="1.500">
            <path d="M5 1h12v12H5z" fill="#fff" />
            <path d="M1 4h12v12H1z" fill="#fff" />
            <path d="M5 8h4v4H5z" fill="#8a8a8a" />
          </svg>
        </button>
        <button aria-label="Close drawing">
          <svg width="18" height="18" viewBox="0 0 18 18">
            <path d="M3 3l12 12M15 3L3 15" stroke="#44474d" strokeWidth="6" />
            <path d="M3 3l12 12M15 3L3 15" stroke="#fff" strokeWidth="3" />
          </svg>
        </button>
      </div>

      <svg width="78" height="132" viewBox="0 0 78 132" fill="none" stroke="#1c4be0" strokeWidth="1.500" className="absolute bottom-6 left-6">
        <path d="M1 1v129h75zM1 118h12v12M3 36l9 11 9-11M12 47v9M45 110l19 19M64 110l-19 19" />
      </svg>

      <NavigationBar />

      <div className="absolute inset-x-0 bottom-0 flex justify-center">
        <CommandWindow />
      </div>
    </div>
  </main>
);

/* ---------- page setup dialog ---------- */

const Group = ({ title, className, children }: ChildrenProps & { title: string }) => (
  <fieldset className={clsx("border border-[#dcdcdc]", className)}>
    <legend className="ml-1.5 h-5 px-[3px] leading-5">{title}</legend>
    {children}
  </fieldset>
);

const Chevron = ({ className }: { className?: string }) => (
  <svg
    width="12"
    height="7"
    viewBox="0 0 12 7"
    fill="none"
    stroke="currentColor"
    strokeWidth="1.300"
    className={clsx("pointer-events-none absolute right-2", className)}
  >
    <path d="M1 1l5 5 5-5" />
  </svg>
);

const Select = ({
  id,
  value,
  className,
  label,
  disabled = false,
  icon,
}: {
  id?: string;
  value: string;
  className?: string;
  label?: string;
  disabled?: boolean;
  icon?: ReactNode;
}) => (
  <div
    className={clsx(
      "relative flex items-center rounded-xs border",
      disabled
        ? "border-[#e8e8e8] bg-[#fafafa] text-[#6d6d6d]"
        : "border-[#d0d0d0] border-b-[#b4b4b4] bg-white",
      className
    )}
  >
    {icon ? (
      <div className="m-0.5 mr-[26px] flex flex-1 items-center gap-1 border border-dotted border-black">
        {icon}
        <select id={id} className="flex-1 appearance-none outline-none">
          <option>{value}</option>
        </select>
      </div>
    ) : (
      <select
        id={id}
        aria-label={label}
        disabled={disabled}
        className={clsx(
          "appearance-none pl-[3px] outline-none",
          disabled ? "mr-6 ml-px h-5 flex-1 bg-[#f0f0f0]" : "size-full"
        )}
      >
        <option>{value}</option>
      </select>
    )}
    <Chevron className={disabled ? "text-[#b4b4b4]" : "text-[#5c5c5c]"} />
  </div>
);

const Check = ({
  label,
  checked = false,
  disabled = false,
}: {
  label: string;
  checked?: boolean;
  disabled?: boolean;
}) => (
  <label className={clsx("flex h-5 items-center gap-1", disabled && "text-[#6d6d6d]")}>
    <span className="relative size-5">
      <input
        type="checkbox"
        defaultChecked={checked}
        disabled={disabled}
        className="peer block size-5 appearance-none rounded border border-[#626262] bg-[#f5f5f5] checked:border-[#005fb8] checked:bg-[#005fb8] disabled:border-[#c0c0c0]"
      />
      <svg
        viewBox="0 0 20 20"
        fill="none"
        stroke="#fff"
        strokeWidth="1.100"
        className="pointer-events-none absolute inset-0 hidden peer-checked:block"
      >
        <path d="M5 10.500l3.500 3.500L15 7.500" />
      </svg>
    </span>
    {label}
  </label>
);

const Radio = ({ label, checked = false }: { label: string; checked?: boolean }) => (
  <label className="flex h-5 items-center gap-1">
    <input
      type="radio"
      name="orientation"
      defaultChecked={checked}
      className="size-5 appearance-none rounded-full border border-[#626262] bg-[#f5f5f5] checked:border-6 checked:border-[#005fb8] checked:bg-white"
    />
    {label}
  </label>
);

const Field = ({
  id,
  value,
  label,
  className,
}: {
  id?: string;
  value: string;
  label?: string;
  className?: string;
}) => (
  <input
    id={id}
    aria-label={label}
    defaultValue={value}
    className={clsx(
      "h-[33px] rounded-xs border border-[#ececec] border-b-[#868686] bg-white px-1.5 pb-2 outline-none",
      className
    )}
  />
);

const PushButton = ({
  children,
  className,
  primary = false,
}: ChildrenProps & { primary?: boolean }) => (
  <button
    className={clsx(
      "h-[31px] rounded border bg-[#fdfdfd]",
      primary ? "border-[#0078d4]" : "border-[#d0d0d0] border-b-[#bcbcbc]",
      className
    )}
  >
    {children}
  </button>
);

const PlotterIcon = ({ dim = false }: { dim?: boolean }) => (
  <svg width="24" height="24" viewBox="0 0 24 24" fill="none" stroke={dim ? "#a8a8a8" : "#4a4a4a"}>
    <path d="M.5 .5h23v10H.5z" fill={dim ? "#f4f4f4" : "#fff"} />
    <path d="M1 6h22v4H1z" fill={dim ? "#c0c0c0" : "#8c8c8c"} stroke="none" />
    <path d="M7 1h10v8H7z" fill={dim ? "#a8a8a8" : "#5c5c5c"} stroke="none" />
    <path d="M7 9v8h10V9" fill="#fff" />
    <path d="M9 9h6v5H9z" fill={dim ? "#d0d0d0" : "#69b1e8"} stroke="none" />
    <path d="M4 11v12M20 11v12M4 19h16M0 23h4M20 23h4" />
    {dim && <path d="M14 23l8-9" strokeWidth="3" />}
  </svg>
);

const hatchOffsets = Array.from({ length: 25 }, (_, i) => i * 7 + 4);

const PaperPreview = () => (
  <svg width="149" height="143" viewBox="0 0 149 143" fill="none" stroke="#000" className="mt-5 bg-white">
    <clipPath id="printable">
      <path d="M25 35h74v96H25z" />
    </clipPath>
    <path d="M24.500 28.500h77v109h-77zM25.500 34.500h74v97h-74z" />
    <g clipPath="url(#printable)">
      {hatchOffsets.map((o) => (
        <path key={o} d={`M25 ${35 + o}L${25 + o} 35`} />
      ))}
    </g>
    <path d="M24.500 5v20M101.500 5v20M3 16.500h21M124 16.500h-22M17 10l7 6.500-7 6.500M109 10l-7 6.500 7 6.500" />
    <path d="M104 28.500h20M104 137.500h20M113.500 29v20M113.500 117v20M107 35l6.500-6.500 6.500 6.500M107 131l6.500 6.500 6.500-6.500" />
    <g fill="#000" stroke="none" fontSize="16" fontFamily="Liberation Mono, monospace" textAnchor="middle">
      <text x="63" y="22">210 MM</text>
      <text transform="translate(108 83) rotate(90)">297 MM</text>
    </g>
  </svg>
);

const PageSetupDialog = () => (
  <div
    role="dialog"
    aria-labelledby="dialog-title"
    className="w-[1046px] overflow-hidden rounded-xl bg-[#f0f0f0] text-[15px] leading-5 text-black shadow-[0_36px_76px_rgba(0,0,0,0.43),0_0_3px_rgba(0,0,0,0.4)]"
  >
    <div className="flex h-[43px] items-center bg-[#f0f3f9] pr-4 pb-0.5 pl-3">
      <svg width="23" height="25" viewBox="0 0 23 25">
        <path d="M0 3l4-3v16H0z" fill="#ff7a9c" />
        <path d="M3 0h16l4 3v14H3z" fill="#e51050" />
        <path d="M3 17h20v8H3z" fill="#7c0a2e" />
        <text x="12" y="14" fill="#fff" fontSize="13" fontWeight="700" textAnchor="middle" fontFamily="Noto Sans, sans-serif">A</text>
        <text x="13" y="23" fill="#fff" fontSize="6" fontWeight="700" textAnchor="middle" fontFamily="Noto Sans, sans-serif">CAD</text>
      </svg>
      <h2 id="dialog-title" className="ml-2 flex-1 text-[17px]">
        Page Setup - a4
      </h2>
      <button aria-label="Close">
        <svg width="17" height="17" viewBox="0 0 17 17" stroke="#1a1a1a" strokeWidth="1.500">
          <path d="M1 1l15 15M16 1L1 16" />
        </svg>
      </button>
    </div>

    <div className="flex gap-2 px-[18px] pt-[13px]">
      <div className="min-w-0 flex-1">
        <Group title="Page setup" className="h-[96px]">
          <div className="flex h-[74px] items-center pb-0.5 pl-[19px]">
            <span className="w-[107px]">Name:</span>
            <span>&lt;None&gt;</span>
            <svg width="36" height="46" viewBox="0 0 36 46" className="mr-[69px] mb-1 ml-auto">
              <path d="M0 0h27l9 10v36H0z" fill="#2f66a3" />
              <path d="M27 0v10h9z" fill="#8ba9cc" />
              <path d="M0 25h11l25 10v11H0z" fill="#f7b520" />
              <path d="M11.500 0v25M0 13.500h36" stroke="#fff" />
              <path d="M8 10h7v7H8z" fill="#2f66a3" stroke="#fff" />
              <text x="15" y="42" fill="#3f3a2e" fontSize="11" fontWeight="700" textAnchor="middle" fontFamily="Noto Sans, sans-serif">DWG</text>
            </svg>
          </div>
        </Group>

        <Group title="Printer/plotter" className="mt-1.5 h-[229px]">
          <div className="flex gap-3 pl-[17px]">
            <div className="flex w-[486px] flex-col pt-2">
              <div className="flex h-[34px]">
                <label htmlFor="printer" className="w-[106px] pt-1">Name:</label>
                <Select id="printer" value="DWG To PDF.pc3" icon={<PlotterIcon />} className="h-[34px] flex-1" />
              </div>
              <dl className="mt-1.5 grid grid-cols-[106px_1fr]">
                <dt className="h-9 leading-9">Plotter:</dt>
                <dd className="h-9 leading-9">DWG To PDF - PDF ePlot - by Autodesk</dd>
                <dt className="h-9 leading-9">Where:</dt>
                <dd className="h-9 leading-9">File</dd>
                <dt className="h-9 leading-9">Description:</dt>
              </dl>
              <PushButton className="mt-3 w-[167px] self-end">PDF Options...</PushButton>
            </div>
            <div className="pt-1.5">
              <PushButton className="w-[147px]">Properties</PushButton>
              <PaperPreview />
            </div>
          </div>
        </Group>

        <Group title="Paper size" className="mt-3.5 h-[82px]">
          <Select label="Paper size" value="ISO A4 (210.00 x 297.00 MM)" className="mt-3.5 ml-[17px] h-[27px] w-[486px]" />
        </Group>

        <div className="mt-2 flex gap-2">
          <div className="w-[420px]">
            <Group title="Plot area" className="h-[115px]">
              <div className="pt-3 pl-[17px]">
                <label htmlFor="what-to-plot" className="block h-5">What to plot:</label>
                <Select id="what-to-plot" value="Layout" className="mt-[11px] h-[27px] w-[128px]" />
              </div>
            </Group>
            <Group title="Plot offset (origin set to printable area)" className="mt-1.5 h-[129px]">
              <div className="flex items-center pt-[5px] pl-5">
                <label htmlFor="offset-x" className="w-9">X:</label>
                <Field id="offset-x" value="0.00" className="w-[88px]" />
                <span className="ml-[17px] w-[97px]">mm</span>
                <Check label="Center the plot" disabled />
              </div>
              <div className="mt-3.5 flex items-center pl-5">
                <label htmlFor="offset-y" className="w-9">Y:</label>
                <Field id="offset-y" value="0.00" className="w-[88px]" />
                <span className="ml-[17px]">mm</span>
              </div>
            </Group>
          </div>
          <Group title="Plot scale" className="h-[250px] flex-1">
            <div className="flex flex-col pt-4 pl-2">
              <Check label="Fit to paper" disabled />
              <div className="mt-4 flex items-center">
                <label htmlFor="scale" className="w-[49px]">Scale:</label>
                <Select id="scale" value="Custom" className="h-[27px] w-[196px]" />
              </div>
              <div className="mt-[18px] flex items-center pl-[49px]">
                <Field label="Paper units" value="1000" className="w-[78px]" />
                <Select label="Unit" value="mm" className="mr-2 ml-[5px] h-[27px] w-[88px]" />
                =
              </div>
              <div className="mt-3 flex items-center pl-[49px]">
                <Field id="drawing-units" value="1" className="w-[78px]" />
                <label htmlFor="drawing-units" className="ml-[5px]">unit</label>
              </div>
              <div className="mt-3 pl-[49px]">
                <Check label="Scale lineweights" />
              </div>
            </div>
          </Group>
        </div>
      </div>

      <div className="w-[306px]">
        <Group title="Plot style table (pen assignments)" className="h-[136px]">
          <div className="flex gap-0.5 pt-[19px] pl-5">
            <Select label="Plot style table" value="None" className="h-[30px] w-[229px]" />
            <button
              disabled
              aria-label="Edit plot style"
              className="flex size-9 items-center justify-center rounded border border-[#e4e4e4] bg-[#fafafa]"
            >
              <PlotterIcon dim />
            </button>
          </div>
          <div className="mt-[11px] pl-5">
            <Check label="Display plot styles" />
          </div>
        </Group>

        <Group title="Shaded viewport options" className="mt-3 h-[184px]">
          <div className="flex items-center pt-3.5 pl-5">
            <span className="w-[108px] text-[#a8a8a8] [text-shadow:1px_1px_#fff]">Shade plot</span>
            <Select label="Shade plot" value="As displayed" disabled className="h-[29px] w-[161px]" />
          </div>
          <div className="mt-[18px] flex items-center pl-5">
            <label htmlFor="quality" className="w-[108px]">Quality</label>
            <Select id="quality" value="Normal" className="h-[27px] w-[161px]" />
          </div>
          <div className="mt-[22px] flex items-center pl-5">
            <label htmlFor="dpi" className="w-[108px] text-[#a8a8a8] [text-shadow:1px_1px_#fff]">DPI</label>
            <input
              id="dpi"
              disabled
              defaultValue="100"
              className="h-[31px] w-[161px] border border-[#fafafa] bg-[#f0f0f0] px-1.5 pb-2 text-[#6d6d6d]"
            />
          </div>
        </Group>

        <Group title="Plot options" className="mt-[13px] h-[191px]">
          <div className="flex flex-col gap-[11px] pt-[11px] pl-5">
            <Check label="Plot object lineweights" checked />
            <Check label="Plot transparency" />
            <Check label="Plot with plot styles" checked />
            <Check label="Plot paperspace last" checked />
            <Check label="Hide paperspace objects" />
          </div>
        </Group>

        <Group title="Drawing orientation" className="mt-[15px] h-[134px]">
          <div className="flex items-center justify-between pt-3 pl-[17px]">
            <div className="flex flex-col gap-[15px]">
              <Radio label="Portrait" checked />
              <Radio label="Landscape" />
              <div className="pl-[3px]">
                <Check label="Plot upside-down" />
              </div>
            </div>
            <svg width="38" height="48" viewBox="0 0 38 48" className="mr-[46px] mb-4">
              <path d="M.5 .5h25l12 12v35H.5z" fill="#fdfdfd" stroke="#5c5c5c" />
              <path d="M25 0v13h13z" fill="#5c5c5c" />
              <text x="19" y="39" fill="#1e90ee" fontSize="33" textAnchor="middle" fontFamily="Noto Sans, sans-serif">A</text>
            </svg>
          </div>
        </Group>
      </div>
    </div>

    <div className="mt-[18px] flex px-[18px] pb-2">
      <PushButton className="mr-auto w-[111px]">Preview...</PushButton>
      <PushButton primary className="w-[111px]">OK</PushButton>
      <PushButton className="ml-8 w-[111px]">Cancel</PushButton>
      <PushButton className="ml-8 w-[111px]">Help</PushButton>
    </div>
  </div>
);

/* ---------- status bar ---------- */

const StatusGroup = ({ children, className }: ChildrenProps) => (
  <div className={clsx("flex h-9 items-center bg-[#3b4453] text-[#dcdcdc]", className)}>
    {children}
  </div>
);

const StatusButton = ({
  label,
  active = false,
  children,
}: ChildrenProps & { label: string; active?: boolean }) => (
  <button
    aria-label={label}
    className={clsx(
      "flex h-[34px] w-[34px] items-center justify-center",
      active && "bg-[#5f8fc2] text-white"
    )}
  >
    <Icon>{children}</Icon>
  </button>
);

const annotationA = "M10 0l3 8v6l7 10h-4l-6-4-6 4H0l7-10V8z";

const StatusBar = () => (
  <footer className="flex h-[46px] items-start pl-4 text-[17px] text-[#f0f0f0]">
    <nav aria-label="Layouts" className="flex h-9 items-center">
      <Slash />
      <button className="ml-3 w-[50px]">Model</button>
      <button className="ml-3 h-9 w-[70px] bg-[#3b4453] font-bold [clip-path:polygon(14px_0,100%_0,56px_100%,0_100%)]">
        a4
      </button>
      <div className="mr-4 ml-3 flex">
        <Plus label="New layout" />
      </div>
      <Slash />
    </nav>
    <div className="mr-1 ml-auto flex pt-1">
      <StatusGroup className="w-[63px] justify-center">
        <button className="font-bold">PAPER</button>
      </StatusGroup>
      <StatusGroup className="ml-1.5 w-9 justify-center">
        <StatusButton label="Snap">
          <path d="M5 3v11M0 8.500h11" strokeWidth="1.500" />
          <path d="M9 15.500h14v5H9z" fill="#fff" stroke="#dcdcdc" />
          <path d="M10 16h3v4h-3z" fill="#3b4453" stroke="none" />
        </StatusButton>
      </StatusGroup>
      <StatusGroup className="ml-0.5 w-[156px] justify-between pr-1.5 pl-0.5">
        <StatusButton label="Ortho mode">
          <path d="M1 0v23h23M1 16h7v7" />
        </StatusButton>
        <StatusButton label="Polar tracking">
          <circle cx="10" cy="12" r="9" />
          <path d="M10 12h14M10 12L20 2" />
        </StatusButton>
        <BigArrow />
        <StatusButton label="Isometric drafting">
          <path d="M3 3l17 17" stroke="#e4646e" />
          <path d="M12 1v22" stroke="#4fe08c" />
          <path d="M10 10h4v4h-4z" fill="#3b4453" />
        </StatusButton>
        <BigArrow />
      </StatusGroup>
      <StatusGroup className="ml-0.5 w-24 gap-0.5 pl-px">
        <StatusButton label="Object snap tracking" active>
          <path d="M18 2L1 20h23" strokeWidth="1.800" />
          <Dot x={10} y={11} s={5} />
        </StatusButton>
        <StatusButton label="Object snap" active>
          <path d="M10 3.500h13v19H4V9M1 .5h6v6H1z" strokeWidth="1.500" />
        </StatusButton>
        <BigArrow className="ml-1.5" />
      </StatusGroup>
      <StatusGroup className="ml-1.5 w-[108px] justify-between px-0.5">
        <StatusButton label="Selection cycling">
          <path d="M9 1h14v22H1V9" strokeDasharray="4 3" strokeWidth="1.800" />
          <path d="M10 10h9v9h-9z" strokeWidth="1.500" />
          <path d="M1 1l6 6M1 5V1h4" strokeWidth="2" />
        </StatusButton>
        <StatusButton label="Annotation visibility">
          <path d={annotationA} fill="currentColor" stroke="none" />
          <circle cx="20" cy="5" r="4" />
        </StatusButton>
        <StatusButton label="Auto scale">
          <path d={annotationA} fill="currentColor" stroke="none" />
          <path d="M20 0l-5 7h4l-2 6 7-8h-4l2-5z" fill="currentColor" stroke="none" />
        </StatusButton>
      </StatusGroup>
      <StatusGroup className="ml-1.5 w-[60px] justify-between pr-1.5 pl-0.5">
        <StatusButton label="Workspace">
          <circle cx="12" cy="12" r="6.500" strokeWidth="5" />
          <circle cx="12" cy="12" r="10" strokeWidth="4" strokeDasharray="4 3.850" />
        </StatusButton>
        <BigArrow />
      </StatusGroup>
      <StatusGroup className="ml-0.5 w-9 justify-center">
        <StatusButton label="Annotation monitor">
          <path d="M12 0v24M0 12h24" strokeWidth="3" />
        </StatusButton>
      </StatusGroup>
      <StatusGroup className="ml-1.5 w-9 justify-center">
        <StatusButton label="Isolate objects">
          <path d="M1 1h9v9H1zM10 15l5 8H5z" />
          <circle cx="18" cy="11" r="5" />
        </StatusButton>
      </StatusGroup>
      <StatusGroup className="ml-1.5 w-1" />
      <StatusGroup className="ml-1 w-[72px] justify-around">
        <StatusButton label="Clean screen">
          <path d="M1 4h22v16H1z" strokeWidth="1.500" />
          <path d="M20 7v5l-5-5zM4 17v-5l5 5z" fill="currentColor" stroke="none" />
        </StatusButton>
        <StatusButton label="Customization">
          <path d="M0 3h24M0 12h24M0 21h24" strokeWidth="3" />
        </StatusButton>
      </StatusGroup>
    </div>
  </footer>
);

const App = () => {
  return (
    <div className="bg-[#f4f4f4] px-0.5 font-['Noto_Sans','Noto_Sans_CJK_SC',sans-serif]">
      <div className="flex min-h-screen flex-col border border-l-2 border-[#0696d7] bg-[#222933]">
        <TitleBar />
        <nav aria-label="Ribbon tabs" className="flex h-[30px] pl-2.5 text-[17px]">
          {tabs.map(({ name, className }) => (
            <button key={name} className={clsx("whitespace-nowrap", className)}>
              {name}
            </button>
          ))}
          <button aria-label="Minimize ribbon" className="ml-8 flex items-center gap-1.5 text-[#b4b8be]">
            <svg width="23" height="11" viewBox="0 0 23 11">
              <path d="M0 0h23v11H0z" fill="#c3c5c9" />
              <path d="M8 8l4-5 4 5z" fill="#4a505b" />
            </svg>
            <Arrow />
          </button>
        </nav>
        <Ribbon />
        <FileTabs />
        <div className="mr-[3px] ml-[3px] h-1.5 bg-[#3b4453]" />
        <DrawingArea />
        <div className="mr-[3px] ml-[3px] h-1.5 bg-[#3b4453]" />
        <StatusBar />
      </div>
      <div className="pointer-events-none fixed inset-0 flex items-center justify-center pb-2 pl-0.5">
        <div className="pointer-events-auto">
          <PageSetupDialog />
        </div>
      </div>
    </div>
  );
};

export default App;
